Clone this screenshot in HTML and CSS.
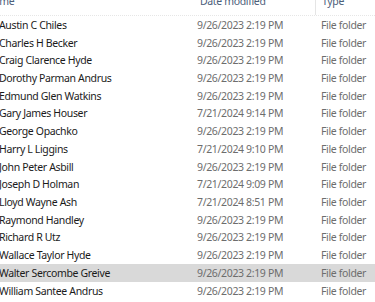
FILE: index.html
```html
<!DOCTYPE html>
<html lang="en">
<head>
    <meta charset="UTF-8">
    <meta name="viewport" content="width=device-width, initial-scale=1.0">
    <title>Folders</title>
    <link rel="stylesheet" href="styles.css">
</head>
<body>
    <div class="list">
        <div class="header">
            <div class="col-name">Name</div>
            <div class="col-date">Date modified</div>
            <div class="col-type">Type</div>
        </div>

        <div class="row"><span class="col-name">Austin C Chiles</span><span class="col-date">9/26/2023 2:19 PM</span><span class="col-type">File folder</span></div>
        <div class="row"><span class="col-name">Charles H Becker</span><span class="col-date">9/26/2023 2:19 PM</span><span class="col-type">File folder</span></div>
        <div class="row"><span class="col-name">Craig Clarence Hyde</span><span class="col-date">9/26/2023 2:19 PM</span><span class="col-type">File folder</span></div>
        <div class="row"><span class="col-name">Dorothy Parman Andrus</span><span class="col-date">9/26/2023 2:19 PM</span><span class="col-type">File folder</span></div>
        <div class="row"><span class="col-name">Edmund Glen Watkins</span><span class="col-date">9/26/2023 2:19 PM</span><span class="col-type">File folder</span></div>
        <div class="row"><span class="col-name">Gary James Houser</span><span class="col-date">7/21/2024 9:14 PM</span><span class="col-type">File folder</span></div>
        <div class="row"><span class="col-name">George Opachko</span><span class="col-date">9/26/2023 2:19 PM</span><span class="col-type">File folder</span></div>
        <div class="row"><span class="col-name">Harry L Liggins</span><span class="col-date">7/21/2024 9:10 PM</span><span class="col-type">File folder</span></div>
        <div class="row"><span class="col-name">John Peter Asbill</span><span class="col-date">9/26/2023 2:19 PM</span><span class="col-type">File folder</span></div>
        <div class="row"><span class="col-name">Joseph D Holman</span><span class="col-date">7/21/2024 9:09 PM</span><span class="col-type">File folder</span></div>
        <div class="row"><span class="col-name">Lloyd Wayne Ash</span><span class="col-date">7/21/2024 8:51 PM</span><span class="col-type">File folder</span></div>
        <div class="row"><span class="col-name">Raymond Handley</span><span class="col-date">9/26/2023 2:19 PM</span><span class="col-type">File folder</span></div>
        <div class="row"><span class="col-name">Richard R Utz</span><span class="col-date">9/26/2023 2:19 PM</span><span class="col-type">File folder</span></div>
        <div class="row"><span class="col-name">Wallace Taylor Hyde</span><span class="col-date">9/26/2023 2:19 PM</span><span class="col-type">File folder</span></div>
        <div class="row selected"><span class="col-name">Walter Sercombe Greive</span><span class="col-date">9/26/2023 2:19 PM</span><span class="col-type">File folder</span></div>
        <div class="row"><span class="col-name">William Santee Andrus</span><span class="col-date">9/26/2023 2:19 PM</span><span class="col-type">File folder</span></div>
    </div>
</body>
</html>
```

FILE: styles.css
```css
body {
    margin: 0;
    background: #fff;
    font-family: "Noto Sans", "Open Sans", sans-serif;
    font-size: 10.5px;
    letter-spacing: -0.35px;
    color: #1b1b1b;
    overflow: hidden;
}

.list {
    width: 375px;
}

/* column header, scrolled partly out of view */
.header {
    display: flex;
    height: 15px;
    border-bottom: 1px dotted #e6e6e6;
    color: #4c607a;
}

.header > div {
    margin-top: -7px;
    line-height: 16px;
}

.header .col-name {
    text-indent: -14px;
    overflow: hidden;
}

.header .col-date {
    padding-left: 3px;
    width: 115px;
    border-right: 1px solid #e5e5e5;
}

.col-name {
    width: 197px;
    white-space: nowrap;
}

.row .col-name {
    margin-left: -1px;
    width: 198px;
}

.col-date {
    width: 118px;
    white-space: nowrap;
}

.col-type {
    padding-left: 6px;
    white-space: nowrap;
}

.row {
    display: flex;
    align-items: center;
    height: 17.73px;
}

.row .col-date,
.row .col-type {
    color: #6d6d6d;
}

.row.selected {
    background: #d9d9d9;
}
```
